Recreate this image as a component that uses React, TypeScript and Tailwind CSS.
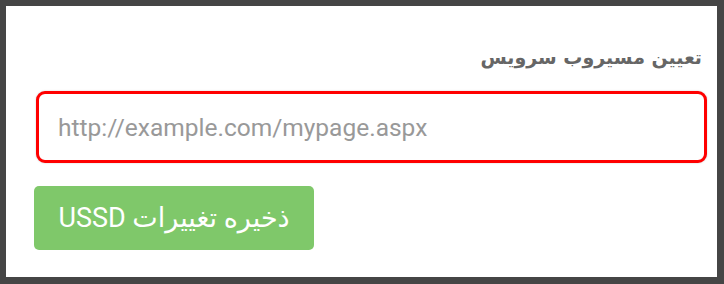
export default function App() {
  return (
    <div className="h-[284px] w-[724px] bg-[#454545] pt-[6px] pl-[6px]">
      <div className="h-[271px] w-[711px] bg-white pl-[30px] pr-[10px] pt-[37px]" dir="rtl">
        <h2 className="pr-[5px] text-[19px] leading-[28px] font-bold text-[#666666] [font-family:'DejaVu_Sans',sans-serif]">
          تعیین مسیروب سرویس
        </h2>
        <div className="mt-[20px]">
          <input
            dir="ltr"
            type="text"
            placeholder="http://example.com/mypage.aspx"
            className="h-[72px] w-[671px] rounded-[9px] border-[3px] border-[#ff0000] bg-white px-[19px] text-[24.5px] text-[#555] shadow-[0_0_2px_rgba(0,0,0,0.2)] outline-none placeholder:text-[#999999] [font-family:Roboto,sans-serif]"
          />
        </div>
        <div className="mt-[23px] flex justify-end">
          <button className="-ml-[2px] h-[64px] w-[280px] rounded-[5px] bg-[#7fc86a] text-[27px] text-white [font-family:Roboto,'DejaVu_Sans',sans-serif]">
            ذخیره تغییرات USSD
          </button>
        </div>
      </div>
    </div>
  );
}
